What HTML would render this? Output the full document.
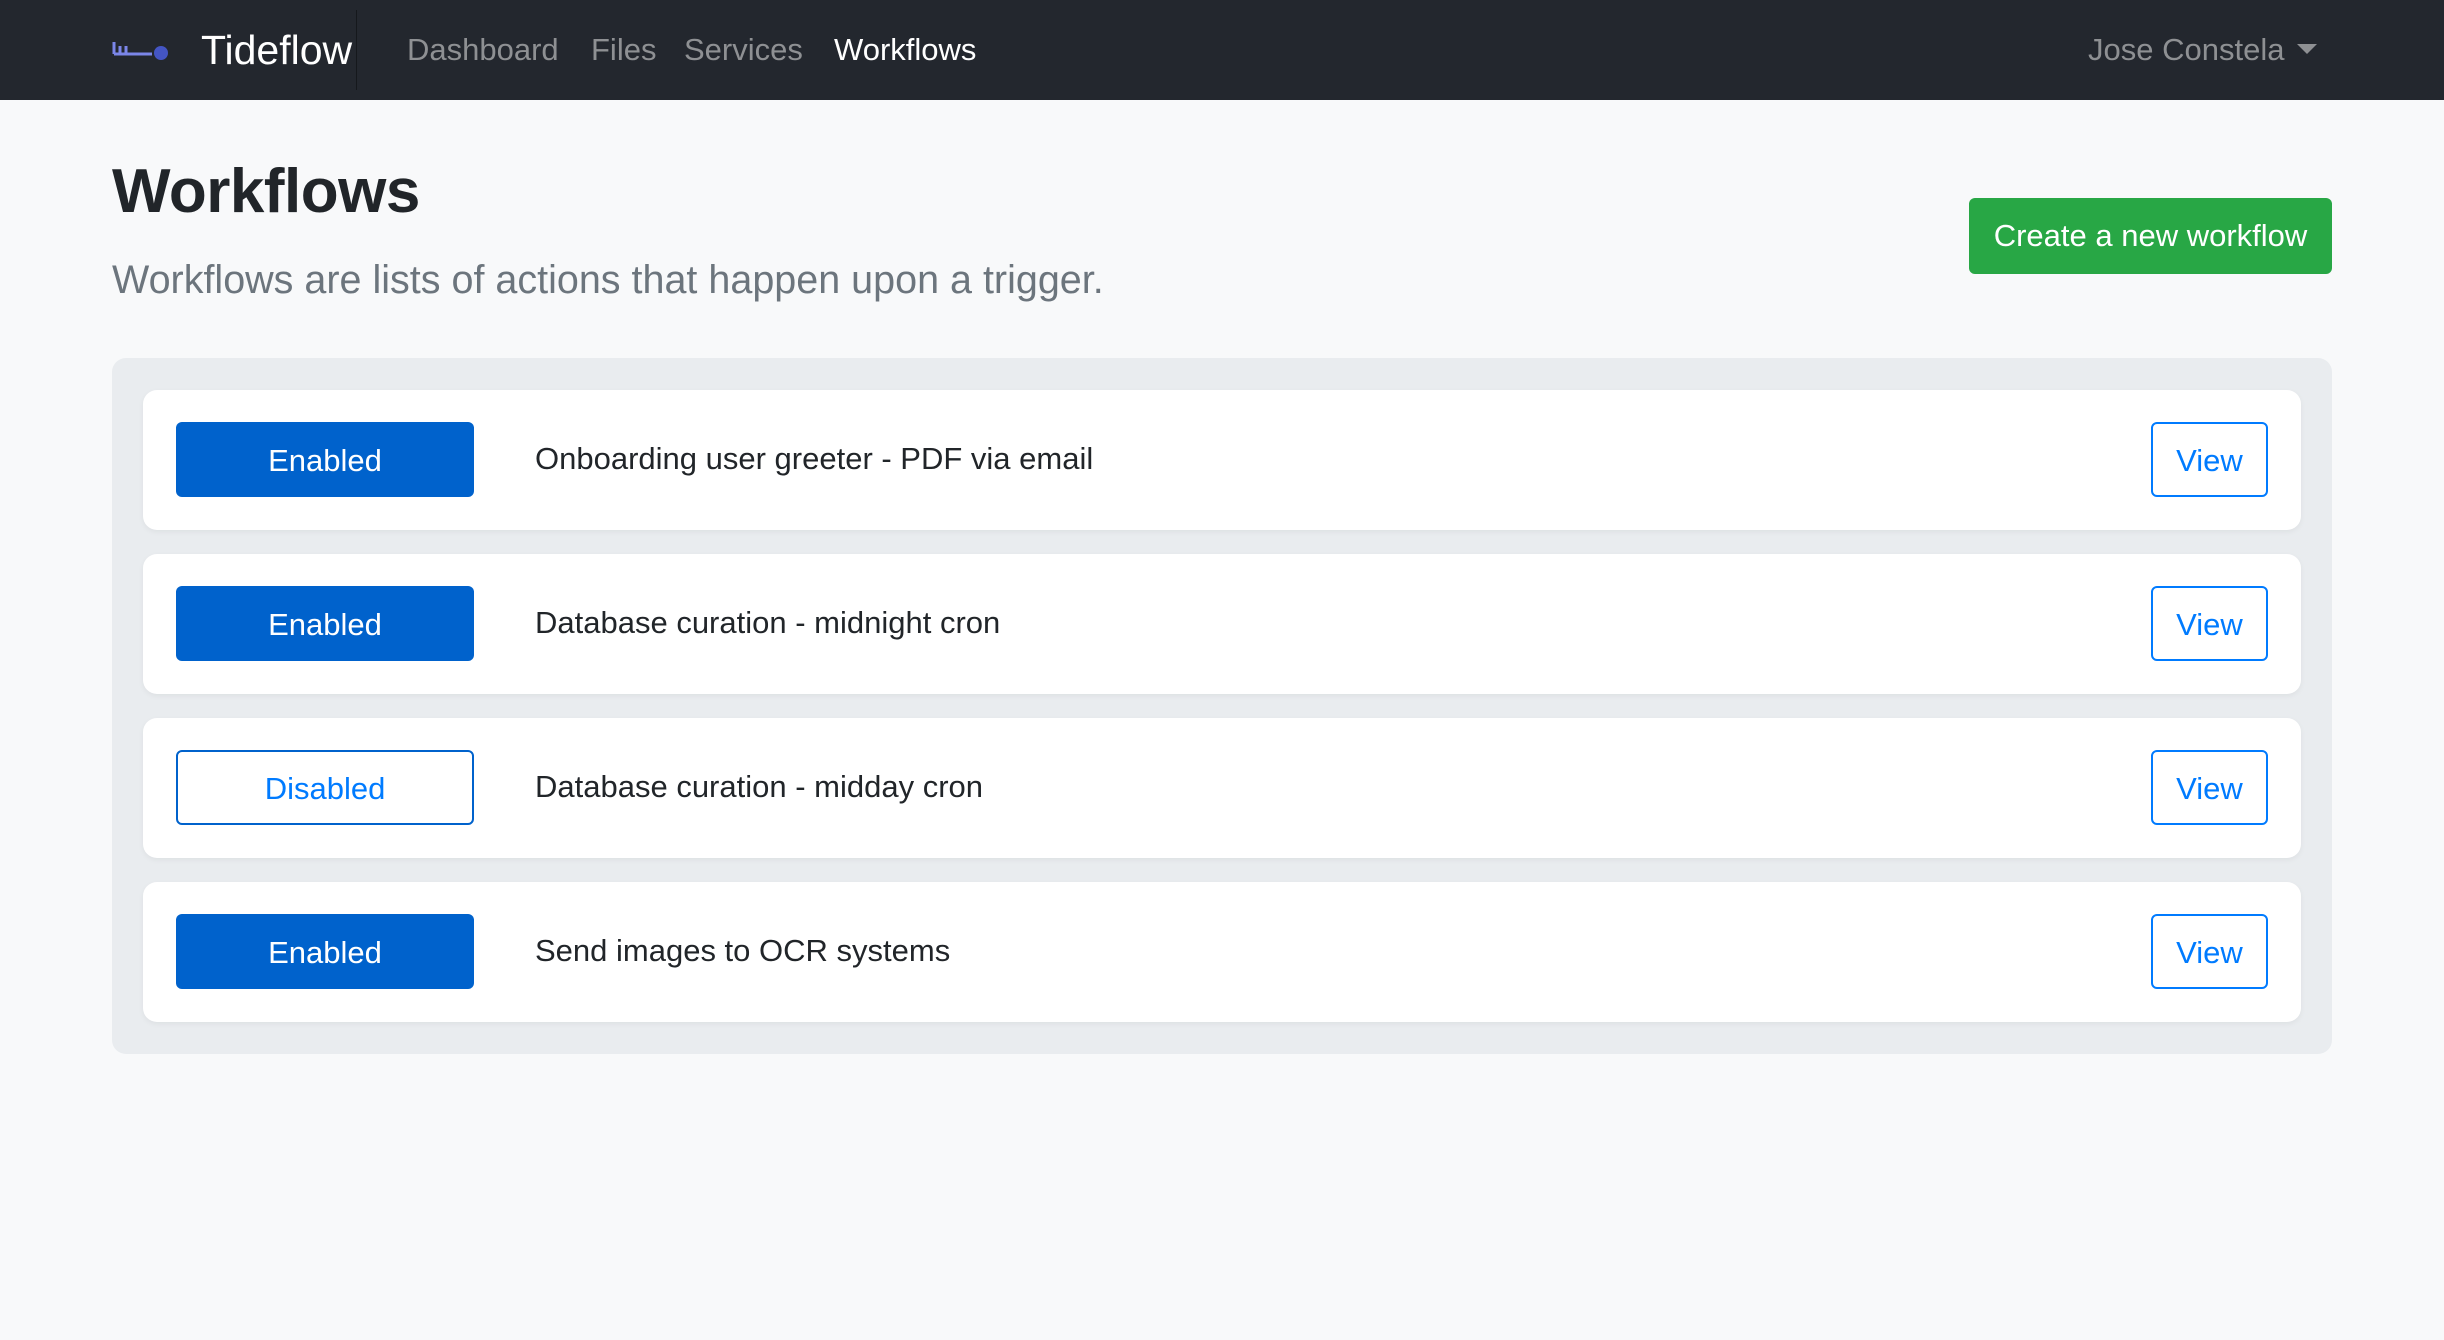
<!DOCTYPE html>
<html><head><meta charset="utf-8"><style>
*{box-sizing:border-box;margin:0;padding:0}
body{width:2444px;height:1340px;background:#f8f9fa;font-family:"Liberation Sans",sans-serif;color:#212529;position:relative;overflow:hidden}
.nav{position:absolute;left:0;top:0;width:2444px;height:100px;background:#23272e}
.abs{position:absolute;white-space:nowrap}
.brand{left:201px;top:26px;font-size:41px;color:#fff;line-height:48px}
.div{left:356px;top:10px;width:1px;height:80px;background:#15181c}
.ni{top:32px;font-size:31px;line-height:36px;color:#8e9093}
.title{left:112px;top:152px;font-size:62px;line-height:80px;font-weight:bold;letter-spacing:-0.5px}
.lead{left:112px;top:258px;font-size:39.5px;line-height:44px;color:#6c757d}
.green{left:1969px;top:198px;width:363px;height:76px;background:#28a745;border-radius:6px;color:#fff;font-size:31px;line-height:76px;text-align:center}
.panel{left:112px;top:358px;width:2220px;height:696px;background:#e9ecef;border-radius:14px}
.card{left:143px;width:2158px;height:140px;background:#fff;border-radius:14px;box-shadow:0 2px 6px rgba(0,0,0,.05)}
.st{left:33px;top:32px;width:298px;height:75px;border-radius:6px;font-size:31px;line-height:77px;text-align:center}
.en{background:#0062cc;color:#fff}
.dis{background:#fff;border:2px solid #0062cc;color:#007bff;line-height:73px}
.nm{left:392px;top:48px;font-size:31px;line-height:42px;color:#212529}
.view{left:2008px;top:32px;width:117px;height:75px;border:2px solid #007bff;border-radius:6px;color:#007bff;font-size:31px;line-height:73px;text-align:center}
</style></head><body>
<div class="nav">
<svg class="abs" style="left:112px;top:40px" width="60" height="22" viewBox="0 0 60 22"><path d="M2 2v12M8 6v8M14 6v8M2 14h38" stroke="#7b86e8" stroke-width="3" fill="none"/><circle cx="49" cy="13" r="7" fill="#4455c4"/></svg>
<div class="abs brand">Tideflow</div>
<div class="abs div"></div>
<div class="abs ni" style="left:407px">Dashboard</div>
<div class="abs ni" style="left:591px">Files</div>
<div class="abs ni" style="left:684px">Services</div>
<div class="abs ni" style="left:834px;color:#fff">Workflows</div>
<div class="abs ni" style="left:2088px">Jose Constela</div>
<div class="abs" style="left:2297px;top:44px;width:0;height:0;border-left:10px solid transparent;border-right:10px solid transparent;border-top:10px solid #8e9093"></div>
</div>
<div class="abs title">Workflows</div>
<div class="abs lead">Workflows are lists of actions that happen upon a trigger.</div>
<div class="abs green">Create a new workflow</div>
<div class="abs panel"></div>
<div class="abs card" style="top:390px"><div class="abs st en">Enabled</div><div class="abs nm">Onboarding user greeter - PDF via email</div><div class="abs view">View</div></div>
<div class="abs card" style="top:554px"><div class="abs st en">Enabled</div><div class="abs nm">Database curation - midnight cron</div><div class="abs view">View</div></div>
<div class="abs card" style="top:718px"><div class="abs st dis">Disabled</div><div class="abs nm">Database curation - midday cron</div><div class="abs view">View</div></div>
<div class="abs card" style="top:882px"><div class="abs st en">Enabled</div><div class="abs nm">Send images to OCR systems</div><div class="abs view">View</div></div>
</body></html>
